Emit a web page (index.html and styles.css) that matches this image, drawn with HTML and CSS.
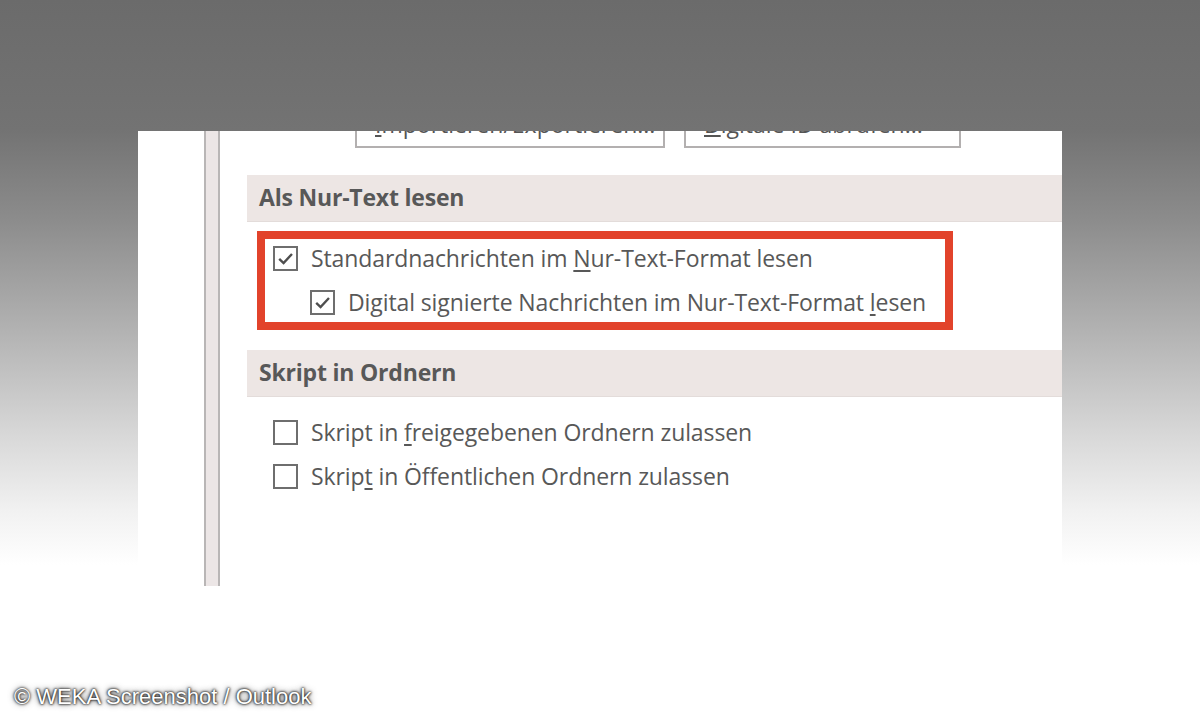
FILE: index.html
```html
<!DOCTYPE html>
<html lang="de">
<head>
<meta charset="utf-8">
<title>Outlook Trust Center</title>
<link rel="stylesheet" href="styles.css">
</head>
<body>
<div class="stage">
  <div class="panel">
    <div class="sidebar"></div>
    <div class="divider"></div>
    <div class="content">
      <div class="buttons">
        <div class="btn btn1"><span><u>I</u>mportieren/Exportieren...</span></div>
        <div class="btn btn2"><span><u>D</u>igitale ID abrufen...</span></div>
      </div>
      <div class="section-head">Als Nur-Text lesen</div>
      <div class="highlight">
        <div class="row">
          <span class="box"><svg viewBox="0 0 24 24" width="23" height="23"><path d="M4.8 12.4 L9.8 17.2 L19.4 6.8" fill="none" stroke="#4e4e4e" stroke-width="2.7" stroke-linejoin="miter"/></svg></span>
          <span class="label">Standardnachrichten im <u>N</u>ur-Text-Format lesen</span>
        </div>
        <div class="row sub">
          <span class="box"><svg viewBox="0 0 24 24" width="23" height="23"><path d="M4.8 12.4 L9.8 17.2 L19.4 6.8" fill="none" stroke="#4e4e4e" stroke-width="2.7" stroke-linejoin="miter"/></svg></span>
          <span class="label">Digital signierte Nachrichten im Nur-Text-Format <u>l</u>esen</span>
        </div>
      </div>
      <div class="section-head second">Skript in Ordnern</div>
      <div class="options">
        <div class="row">
          <span class="box"></span>
          <span class="label">Skript in <u>f</u>reigegebenen Ordnern zulassen</span>
        </div>
        <div class="row">
          <span class="box"></span>
          <span class="label">Skrip<u>t</u> in Öffentlichen Ordnern zulassen</span>
        </div>
      </div>
    </div>
  </div>
  <div class="credit">© WEKA Screenshot / Outlook</div>
</div>
</body>
</html>
```
FILE: styles.css
```css
html, body {
  margin: 0;
  padding: 0;
}
body {
  width: 1200px;
  height: 720px;
  overflow: hidden;
  font-family: "Open Sans", "Noto Sans", sans-serif;
  background: linear-gradient(180deg, #6b6b6b 0px, #737373 130px, #8c8c8c 220px, #b2b2b2 330px, #d6d6d6 430px, #f1f1f1 510px, #ffffff 565px, #ffffff 720px);
}
.stage {
  display: flex;
  flex-direction: column;
  height: 720px;
}
.panel {
  margin-top: 131px;
  margin-left: 138px;
  width: 924px;
  height: 455px;
  background: #ffffff;
  display: flex;
  overflow: hidden;
}
.sidebar {
  width: 66px;
  flex: none;
}
.divider {
  width: 12px;
  flex: none;
  background: #ece6e6;
  border-left: 2px solid #b9b6b6;
  border-right: 2px solid #b9b6b6;
}
.content {
  flex: 1;
  display: flex;
  flex-direction: column;
}
.buttons {
  display: flex;
  gap: 19px;
  margin-left: 135px;
  margin-top: -24px;
}
.btn {
  box-sizing: border-box;
  height: 41px;
  border: 2px solid #b3b0b0;
  background: #fff;
  padding-left: 18px;
  padding-top: 3px;
  font-size: 23px;
  line-height: 24px;
  color: #555;
  white-space: nowrap;
  overflow: hidden;
}
.btn1 { width: 310px; }
.btn2 { width: 277px; }
.section-head {
  margin-top: 27px;
  margin-left: 27px;
  height: 47px;
  box-sizing: border-box;
  background: #ede6e4;
  border-bottom: 1px solid #e3dcda;
  padding-left: 12px;
  padding-bottom: 3px;
  display: flex;
  align-items: center;
  font-weight: 700;
  font-size: 23px;
  color: #585858;
  letter-spacing: -0.2px;
}
.section-head.second {
  margin-top: 20px;
}
.highlight {
  margin-top: 9px;
  margin-left: 37px;
  width: 696px;
  height: 99px;
  box-sizing: border-box;
  border: 8px solid #e2432b;
  padding-left: 8px;
  display: flex;
  flex-direction: column;
  gap: 6px;
}
.row {
  height: 38px;
  display: flex;
  align-items: center;
  gap: 13px;
}
.row.sub {
  padding-left: 37px;
}
.box {
  box-sizing: border-box;
  width: 25px;
  height: 25px;
  border: 2px solid #6e6e6e;
  background: #fff;
  display: flex;
  align-items: center;
  justify-content: center;
  flex: none;
}
.label {
  font-size: 23px;
  color: #585858;
  white-space: nowrap;
  letter-spacing: -0.1px;
}
.label u {
  text-underline-offset: 3px;
  text-decoration-thickness: 1.5px;
}
.options {
  margin-top: 16px;
  margin-left: 53px;
  display: flex;
  flex-direction: column;
  gap: 6px;
}
.credit {
  margin-top: 98px;
  margin-left: 14px;
  font-family: "Liberation Sans", Arial, sans-serif;
  font-size: 22px;
  letter-spacing: 0px;
  color: #ffffff;
  text-shadow: 0 0 2px #111, 0 0 3px #222, 0 0 6px #444;
}
```
